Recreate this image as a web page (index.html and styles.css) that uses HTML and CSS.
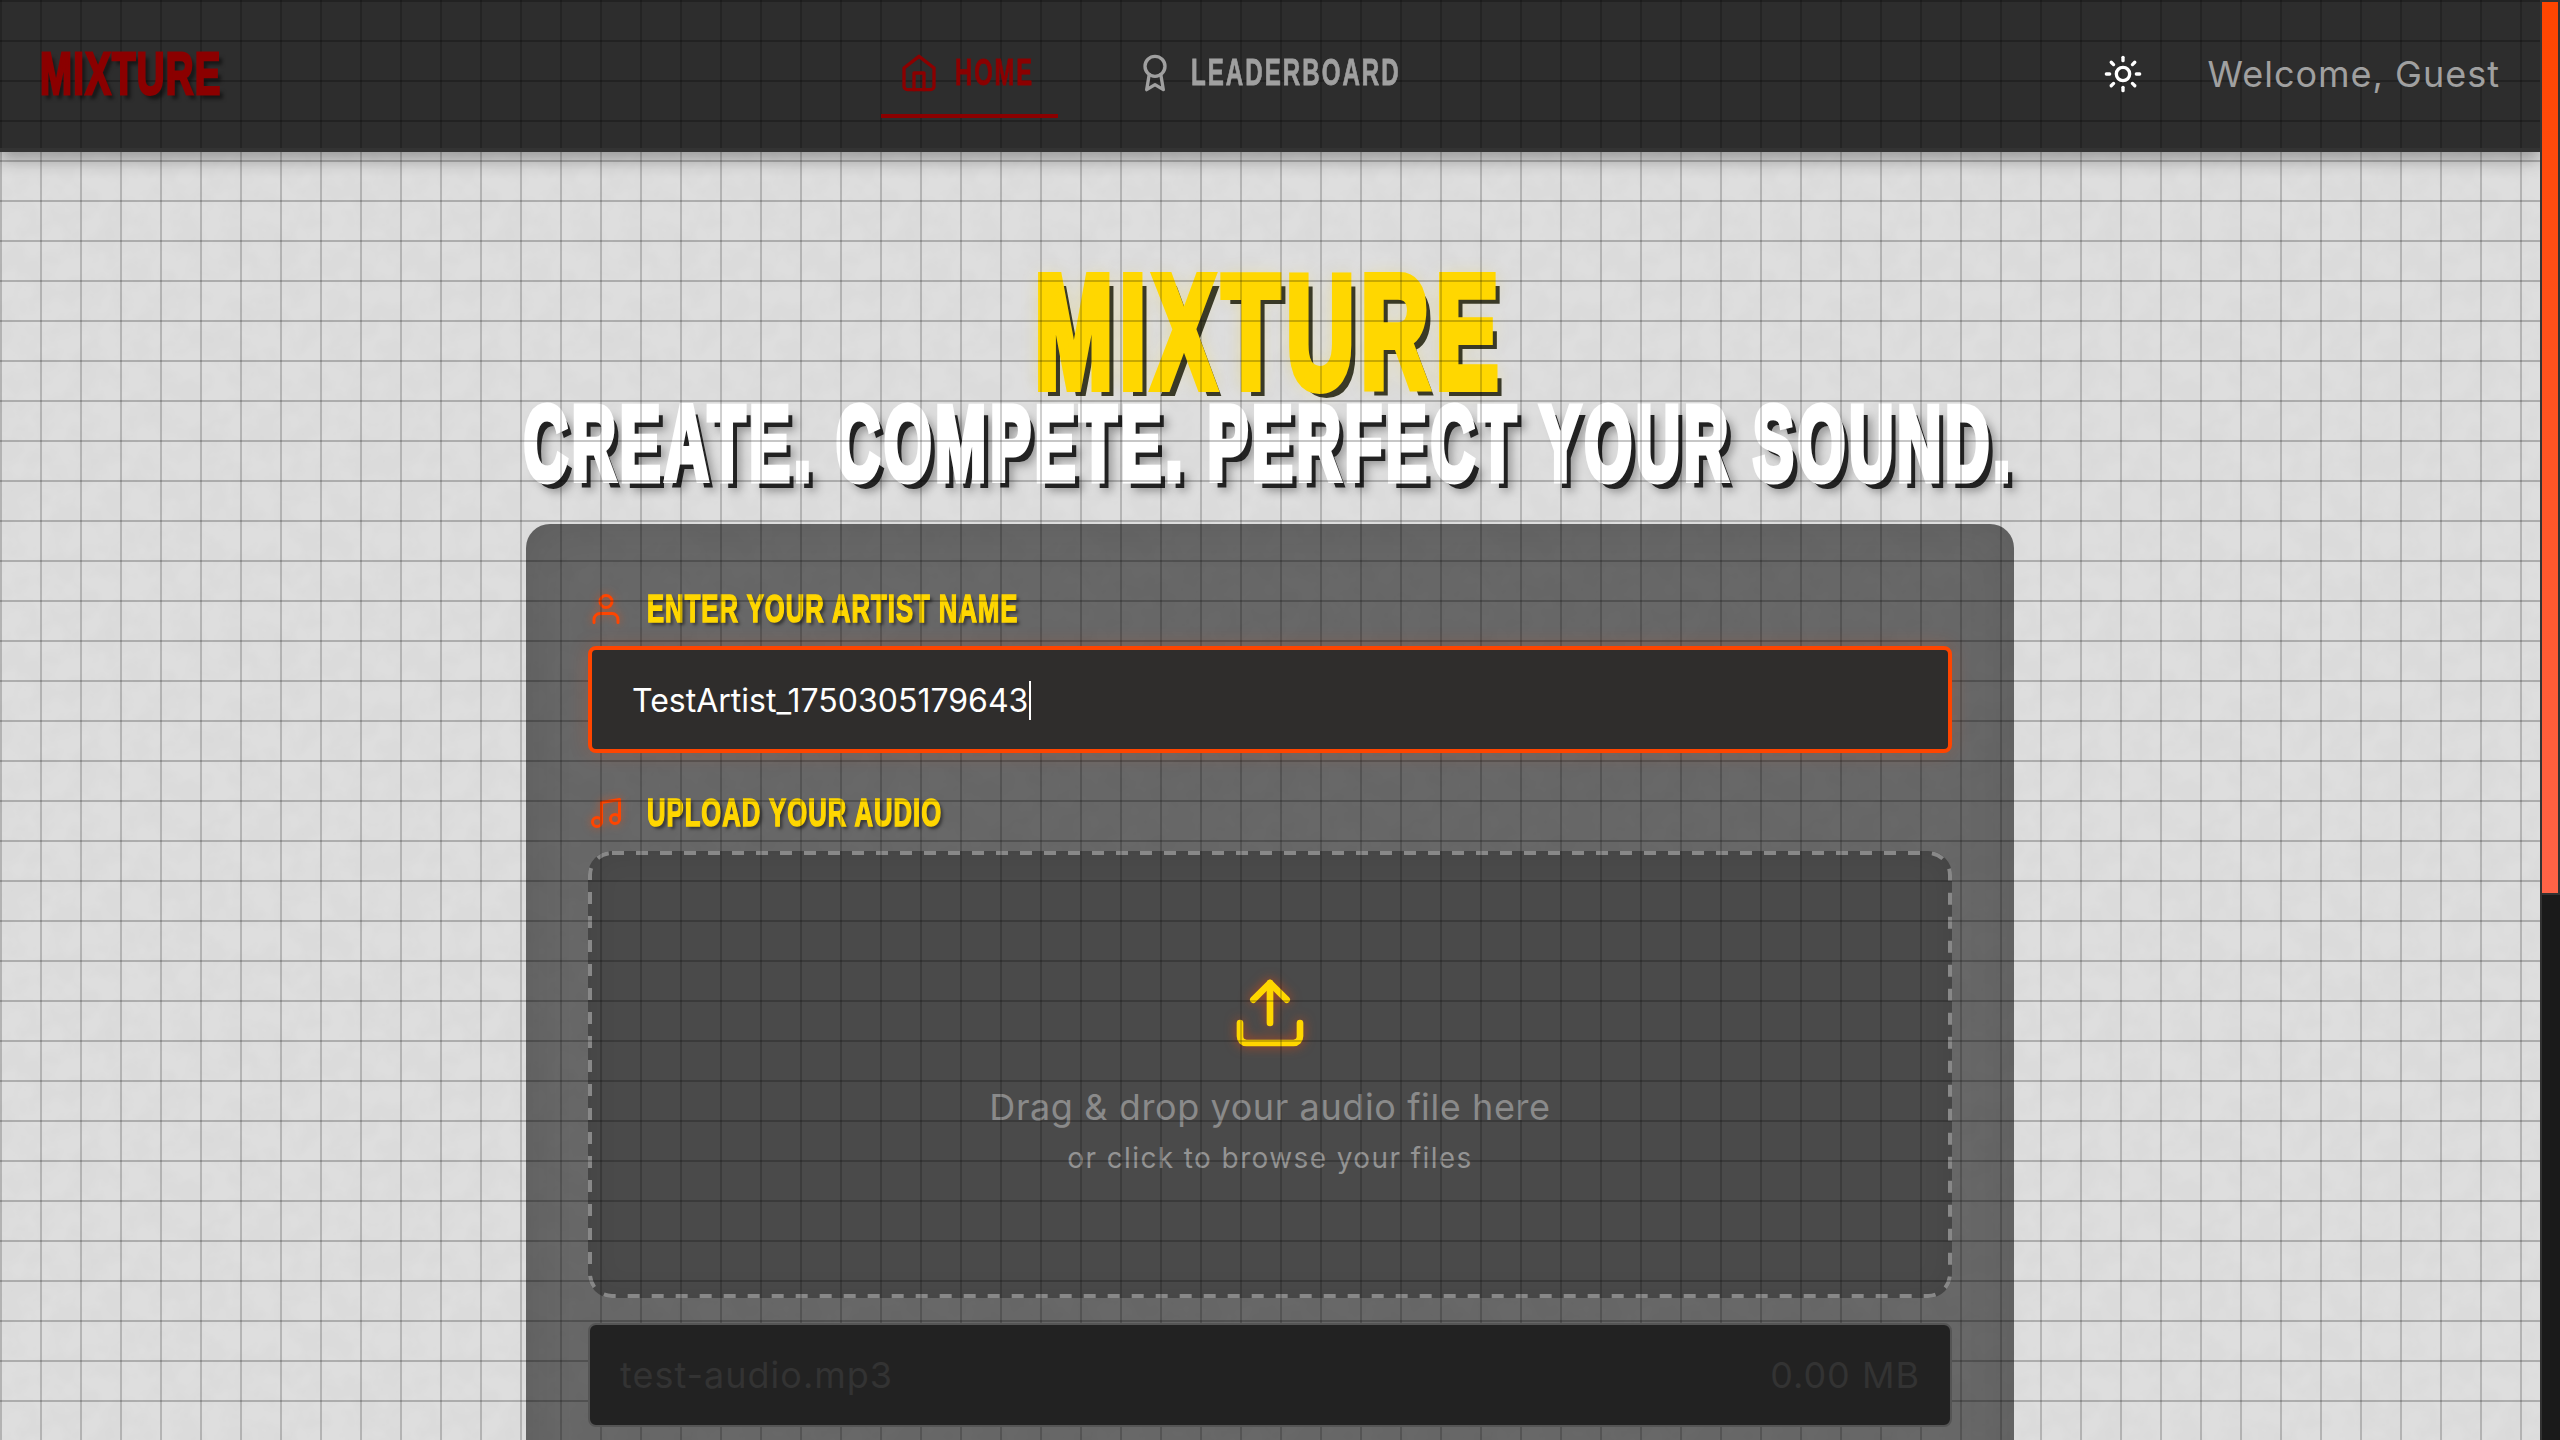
FILE: index.html
```html
<!DOCTYPE html>
<html lang="en">
<head>
<meta charset="utf-8">
<title>Mixture</title>
<link rel="stylesheet" href="styles.css">
</head>
<body>
<div class="page">
  <div class="grid-overlay"></div>
  <header class="topbar">
    <div class="logo"><span class="squeeze logo-text">MIXTURE</span></div>
    <nav class="nav">
      <a class="nav-link active">
        <svg class="nav-icon" viewBox="0 0 24 24"><path d="m3 9 9-7 9 7v11a2 2 0 0 1-2 2H5a2 2 0 0 1-2-2z"/><polyline points="9 22 9 12 15 12 15 22"/></svg>
        <span class="nav-label label-home"><span class="squeeze nav-text">HOME</span></span>
      </a>
      <a class="nav-link">
        <svg class="nav-icon" viewBox="0 0 24 24"><circle cx="12" cy="8" r="6"/><path d="M15.477 12.89 17 22l-5-3-5 3 1.523-9.11"/></svg>
        <span class="nav-label label-board"><span class="squeeze nav-text nav-text-long">LEADERBOARD</span></span>
      </a>
    </nav>
    <div class="user">
      <svg class="sun" viewBox="0 0 24 24"><circle cx="12" cy="12" r="4"/><path d="M12 2v2"/><path d="M12 20v2"/><path d="m4.93 4.93 1.41 1.41"/><path d="m17.66 17.66 1.41 1.41"/><path d="M2 12h2"/><path d="M20 12h2"/><path d="m6.34 17.66-1.41 1.41"/><path d="m19.07 4.93-1.41 1.41"/></svg>
      <span class="welcome">Welcome, Guest</span>
    </div>
  </header>
  <main class="main">
    <h1 class="title"><span class="squeeze title-text">MIXTURE</span></h1>
    <h2 class="subtitle"><span class="squeeze subtitle-text">CREATE. COMPETE. PERFECT YOUR SOUND.</span></h2>
    <section class="card">
      <div class="field-label">
        <svg class="label-icon" viewBox="0 0 24 24"><circle cx="12" cy="7" r="4"/><path d="M4 21v-2a4 4 0 0 1 4-4h8a4 4 0 0 1 4 4v2"/></svg>
        <span class="label-box label-artist"><span class="squeeze label-text">ENTER YOUR ARTIST NAME</span></span>
      </div>
      <div class="text-input"><span>TestArtist_1750305179643</span><i class="caret"></i></div>
      <div class="field-label second">
        <svg class="label-icon" viewBox="0 0 24 24"><path d="M9 18V5l12-2v13"/><circle cx="6" cy="18" r="3"/><circle cx="18" cy="16" r="3"/></svg>
        <span class="label-box label-audio"><span class="squeeze label-text">UPLOAD YOUR AUDIO</span></span>
      </div>
      <div class="dropzone">
        <svg class="dash"><rect/></svg>
        <svg class="upload" viewBox="0 0 24 24"><path d="M21 15v4a2 2 0 0 1-2 2H5a2 2 0 0 1-2-2v-4"/><polyline points="17 8 12 3 7 8"/><line x1="12" y1="3" x2="12" y2="15"/></svg>
        <p class="drop-main">Drag &amp; drop your audio file here</p>
        <p class="drop-sub">or click to browse your files</p>
      </div>
      <div class="file-row"><span>test-audio.mp3</span><span class="file-size">0.00 MB</span></div>
    </section>
  </main>
</div>
<aside class="scrollbar"><div class="thumb"></div></aside>
</body>
</html>
```
FILE: styles.css
```css
* { box-sizing: border-box; }
html, body { height: 100%; overflow: hidden; }
body {
  margin: 0;
  display: flex;
  font-family: Inter, "Liberation Sans", sans-serif;
  background: #1a1a1a;
}
.page {
  position: relative;
  flex: 1;
  min-width: 0;
  height: 100%;
  overflow: hidden;
  background-color: #dedede;
  background-image: url("data:image/svg+xml,%3Csvg xmlns='http://www.w3.org/2000/svg' width='400' height='400'%3E%3Cfilter id='n'%3E%3CfeTurbulence type='fractalNoise' baseFrequency='.04' numOctaves='3' stitchTiles='stitch'/%3E%3CfeColorMatrix values='0 0 0 0 0 0 0 0 0 0 0 0 0 0 0 .5 0 0 0 -.2'/%3E%3C/filter%3E%3Crect width='400' height='400' filter='url(%23n)' opacity='.08'/%3E%3C/svg%3E");
}
.scrollbar {
  flex: none;
  width: 20px;
  height: 100%;
  background: #1a1a1a;
  border-left: 2px solid #333;
}
.thumb {
  height: 895px;
  background: linear-gradient(180deg, #ff4500, #ff6347);
  border: 2px solid #333;
  border-left: 0;
}
.grid-overlay {
  position: absolute;
  inset: 0;
  z-index: 20;
  pointer-events: none;
  background-image:
    linear-gradient(rgba(0, 0, 0, .22) 0, rgba(0, 0, 0, .22) 1.5px, transparent 2.5px),
    linear-gradient(90deg, rgba(0, 0, 0, .19) 0, rgba(0, 0, 0, .19) 1.5px, transparent 2.5px);
  background-size: 40px 40px;
}
.squeeze {
  display: inline-block;
  font-family: "Liberation Sans", sans-serif;
  font-weight: 700;
  white-space: nowrap;
  transform-origin: 0 50%;
}
.topbar {
  position: relative;
  z-index: 25;
  display: flex;
  align-items: center;
  height: 152px;
  padding: 0 40px;
  background-color: #2d2d2d;
  background-image:
    linear-gradient(rgba(0, 0, 0, .25) 2px, transparent 2px),
    linear-gradient(90deg, rgba(0, 0, 0, .2) 2px, transparent 2px);
  background-size: 40px 40px;
  background-clip: padding-box;
  border-bottom: 4px solid #333;
  box-shadow: 0 8px 16px rgba(0, 0, 0, .3);
}
.logo { width: 180px; margin-right: 661px; }
.logo-text {
  font-size: 60px;
  line-height: 1;
  color: #8b0000;
  letter-spacing: 2px;
  transform: scaleX(.64);
  -webkit-text-stroke: 3px #8b0000;
  text-shadow: 6px 5px 5px rgba(0, 0, 0, .5);
}
.nav { display: flex; gap: 59px; align-items: center; height: 100%; margin-top: -2px; }
.nav-link {
  display: flex;
  align-items: center;
  gap: 16px;
  height: 90px;
  padding: 4px 18px 0;
  border-bottom: 4px solid transparent;
  color: #a0a0a0;
}
.nav-link.active { color: #8b0000; border-bottom-color: #8b0000; }
.nav-icon { width: 40px; height: 40px; flex: none; fill: none; stroke: currentColor; stroke-width: 2; stroke-linecap: round; stroke-linejoin: round; }
.nav-label { display: block; }
.label-home { width: 85px; }
.label-board { width: 209px; }
.nav-text {
  font-size: 36px;
  line-height: 1;
  letter-spacing: 3px;
  transform: scaleX(.66);
  -webkit-text-stroke: .8px currentColor;
}
.nav-text-long { transform: scaleX(.67); }
.user { margin-left: auto; display: flex; align-items: center; gap: 65px; }
.sun { width: 40px; height: 40px; fill: none; stroke: #fff; stroke-width: 2; stroke-linecap: round; stroke-linejoin: round; }
.welcome { font-size: 36px; letter-spacing: 1px; color: #a0a0a0; white-space: nowrap; }
.main { position: relative; display: flex; flex-direction: column; align-items: center; padding-top: 116px; }
.title, .subtitle { margin: 0; font-weight: 400; text-align: center; width: 100%; }
.title { height: 128px; }
.subtitle { height: 96px; }
.title-text {
  font-size: 160px;
  line-height: 128px;
  color: #ffd700;
  letter-spacing: 12px;
  transform: scaleX(.585);
  transform-origin: 50% 50%;
  -webkit-text-stroke: 10px #ffd700;
  text-shadow: 12px 9px 0 rgba(40, 40, 20, .9), 0 0 24px rgba(255, 215, 0, .35);
}
.subtitle-text {
  font-size: 105px;
  line-height: 96px;
  color: #fff;
  letter-spacing: 7px;
  transform: translateX(-16px) scaleX(.58);
  transform-origin: 50% 50%;
  -webkit-text-stroke: 7px #fff;
  text-shadow: 10.5px 7.5px 0 #222, 16px 11px 12px rgba(0, 0, 0, .35);
}
.card {
  width: 1488px;
  height: 1796px;
  margin-top: 32px;
  padding: 64px 62px;
  background: rgba(40, 40, 40, .65);
  border-radius: 24px;
  box-shadow: inset 0 0 50px rgba(0, 0, 0, .1);
}
.field-label { display: flex; align-items: center; gap: 23px; height: 42px; }
.field-label.second { margin-top: 39px; }
.label-icon { width: 36px; height: 36px; flex: none; fill: none; stroke: #ff4500; stroke-width: 2; stroke-linecap: round; stroke-linejoin: round; filter: drop-shadow(0 0 4px rgba(255, 69, 0, .6)); }
.label-box { display: block; }
.label-artist { width: 371px; }
.label-audio { width: 291px; }
.label-text {
  font-size: 38px;
  line-height: 1;
  color: #ffd700;
  letter-spacing: 1.5px;
  transform: scaleX(.675);
  -webkit-text-stroke: 1.5px #ffd700;
  text-shadow: 4px 3px 4px rgba(0, 0, 0, .5);
}
.text-input {
  position: relative;
  z-index: 30;
  display: flex;
  align-items: center;
  height: 107px;
  margin-top: 16px;
  padding: 2px 40px 0;
  background: #2f2d2c;
  border: 4px solid #ff4500;
  border-radius: 8px;
  box-shadow: 0 0 20px rgba(255, 69, 0, .2);
  color: #fff;
  font-size: 32px;
}
.caret { display: block; width: 2px; height: 39px; margin-left: 1px; background: #fff; }
.dropzone {
  position: relative;
  display: flex;
  flex-direction: column;
  align-items: center;
  height: 447px;
  margin-top: 17px;
  padding-top: 122px;
  background: #4a4a4a;
  border-radius: 24px;
  box-shadow: inset 0 0 30px rgba(0, 0, 0, .1);
  color: #8a8a8a;
}
.dash { position: absolute; inset: 0; width: 100%; height: 100%; }
.dash rect {
  x: 2px;
  y: 2px;
  width: calc(100% - 4px);
  height: calc(100% - 4px);
  rx: 22px;
  fill: none;
  stroke: #888;
  stroke-width: 4;
  stroke-dasharray: 12 12;
}
.upload { width: 80px; height: 80px; flex: none; fill: none; stroke: #ffd700; stroke-width: 2; stroke-linecap: round; stroke-linejoin: round; filter: drop-shadow(0 0 6px rgba(255, 69, 0, .6)); }
.drop-main { margin: 32px 0 0; font-size: 36px; line-height: 44px; letter-spacing: .6px; }
.drop-sub { margin: 11px 0 0; font-size: 28px; line-height: 36px; letter-spacing: 1.4px; color: #949494; }
.file-row {
  position: relative;
  z-index: 30;
  display: flex;
  justify-content: space-between;
  align-items: center;
  height: 104px;
  margin-top: 25px;
  padding: 0 30px;
  background: #222;
  border: 2px solid #555;
  border-radius: 8px;
  color: #333;
  font-size: 36px;
  letter-spacing: 1px;
}
```
